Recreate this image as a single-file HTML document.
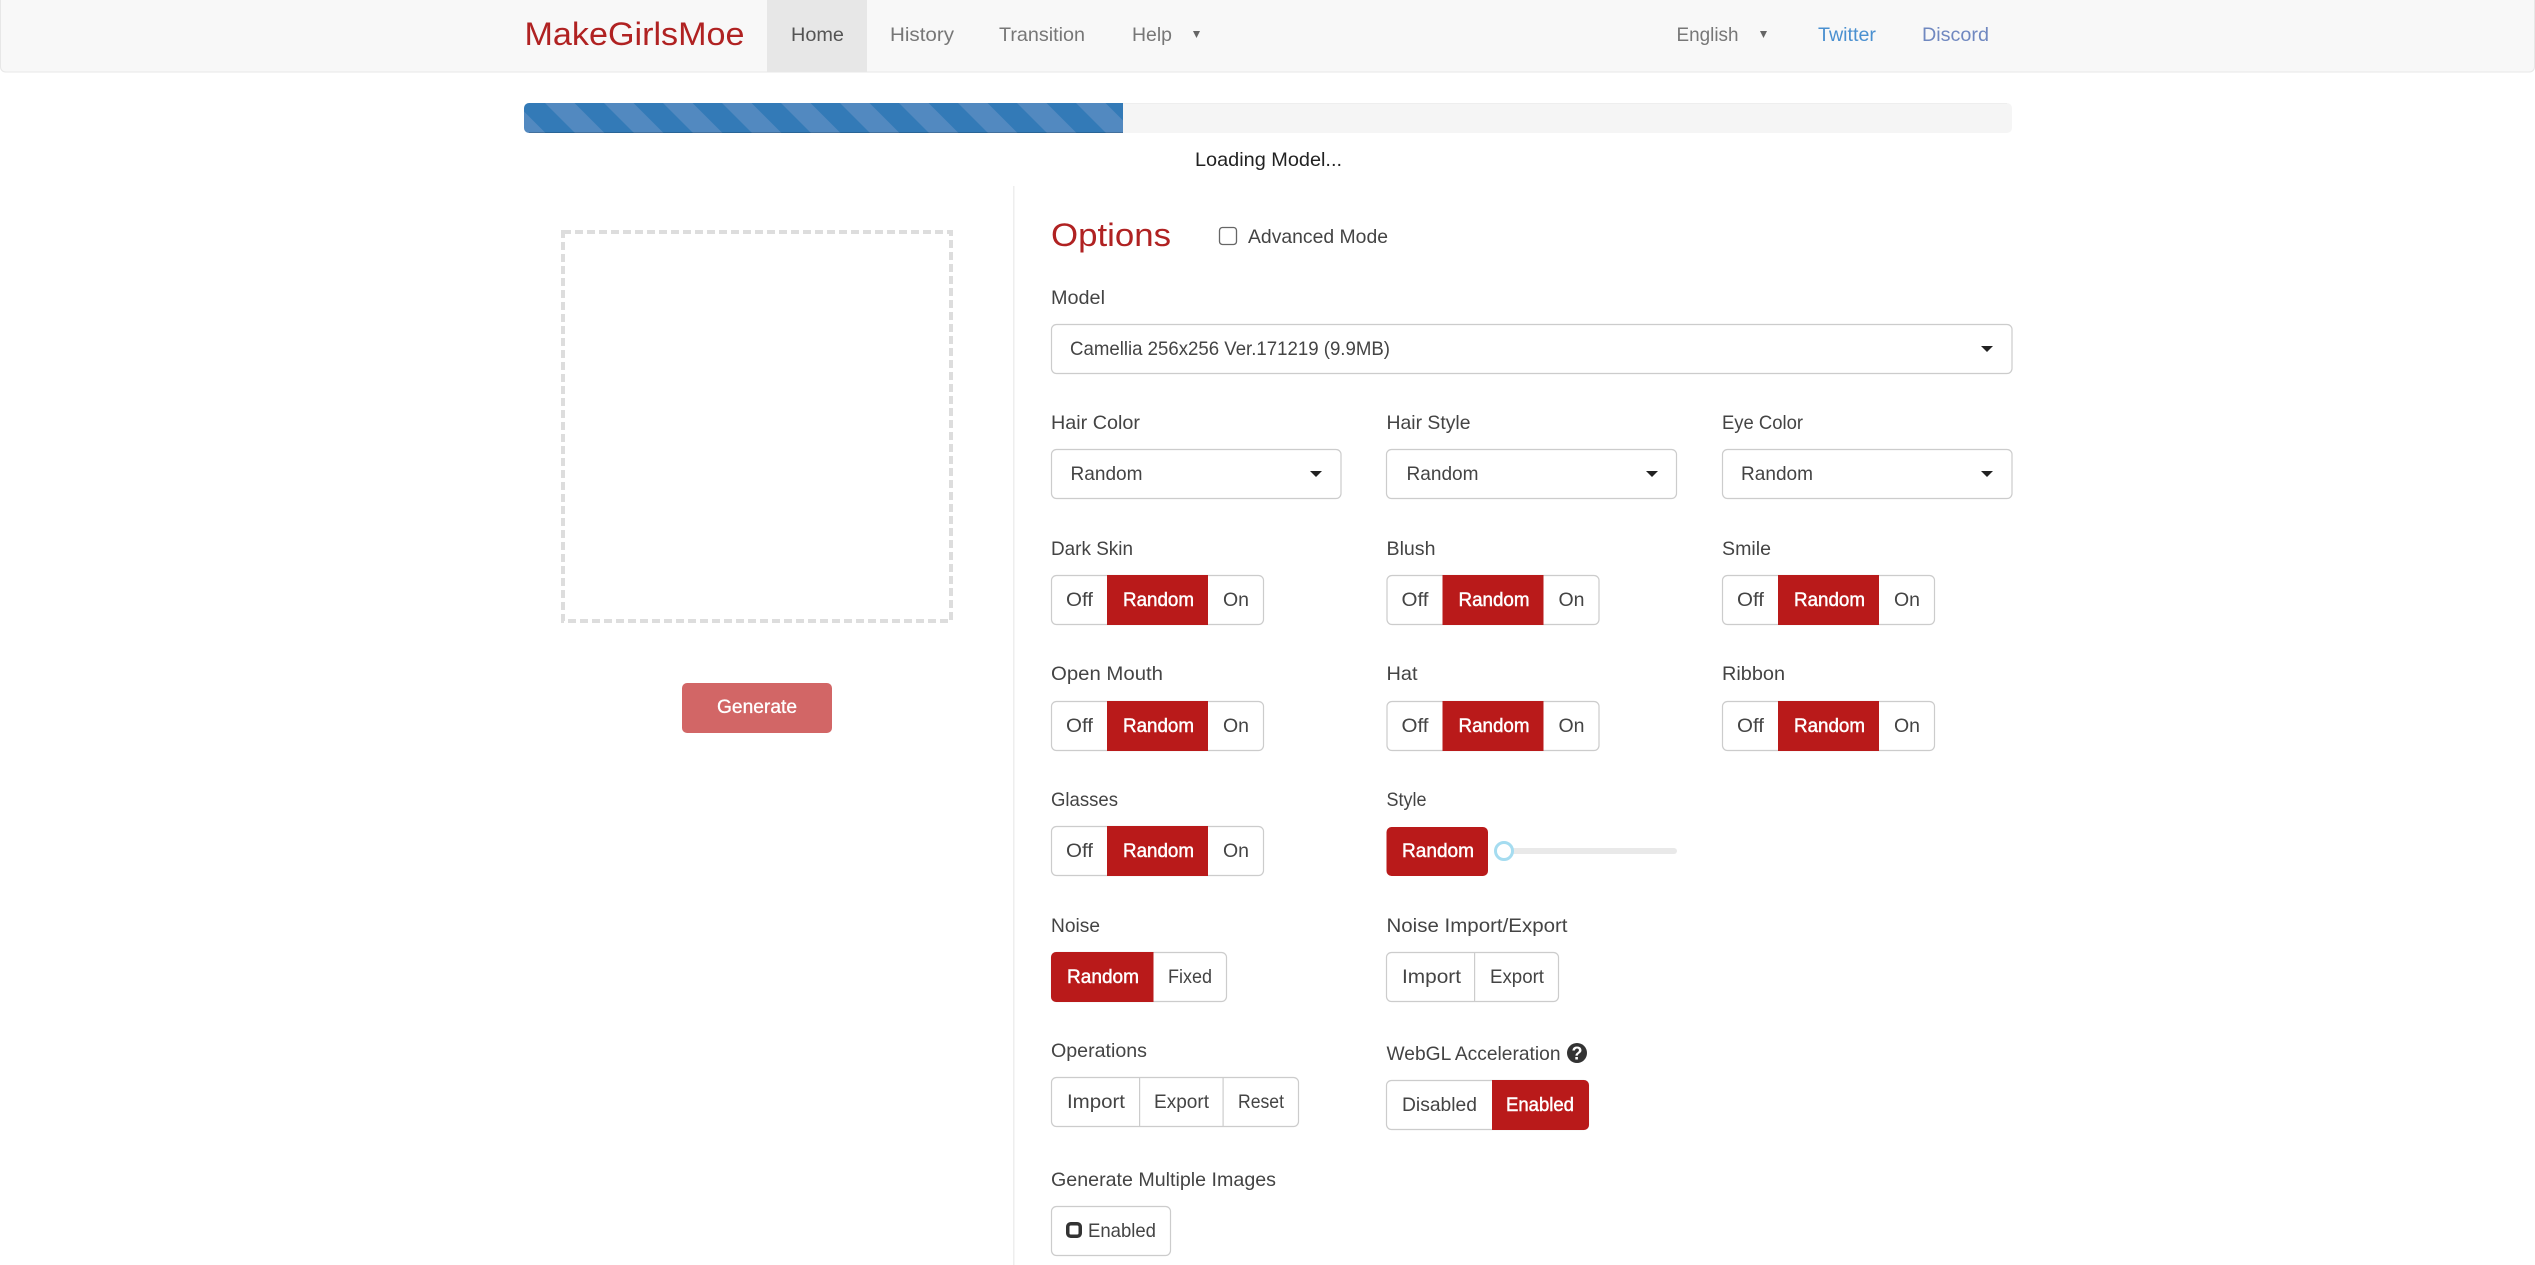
<!DOCTYPE html>
<html lang="en">
<head>
<meta charset="utf-8">
<title>MakeGirlsMoe</title>
<style>
html,body{margin:0;padding:0;background:#fff;width:2535px;height:1265px;overflow:hidden}
svg{display:block}
text{font-family:"Liberation Sans",sans-serif;font-size:19.5px;fill:#444}
.w{fill:#fff;stroke:#fff;stroke-width:.45}
.n{fill:#777}
.r{fill:#b02222;font-size:32px}
.box{fill:#fff;stroke:#ccc;stroke-width:1.2}
.red{fill:#b91a1a}
</style>
</head>
<body>
<svg xmlns="http://www.w3.org/2000/svg" width="2535" height="1265" viewBox="0 0 2535 1265">
<defs>
<pattern id="st" patternUnits="userSpaceOnUse" x="545" y="103" width="59" height="59">
<rect width="59" height="59" fill="#337ab7"/>
<polygon points="0,0 29.5,0 59,29.5 59,59" fill="#5289c0"/>
<polygon points="0,29.5 29.5,59 0,59" fill="#5289c0"/>
</pattern>
<g id="tg">
<rect class="box" x="1051.5" y="575.5" width="212" height="49" rx="5"/>
<rect class="red" x="1107" y="575" width="101" height="50"/>
<text x="1066" y="606" textLength="27" lengthAdjust="spacingAndGlyphs">Off</text>
<text class="w" x="1123" y="606" textLength="71" lengthAdjust="spacingAndGlyphs">Random</text>
<text x="1223" y="606" textLength="26" lengthAdjust="spacingAndGlyphs">On</text>
</g>
</defs>

<!-- navbar -->
<rect x="0.5" y="-8" width="2534" height="80" rx="5" fill="#f8f8f8" stroke="#e7e7e7"/>
<rect x="767" y="0" width="100" height="71.5" fill="#e7e7e7"/>
<text class="r" x="524.5" y="45" textLength="220" lengthAdjust="spacingAndGlyphs">MakeGirlsMoe</text>
<text x="791" y="41" textLength="53" lengthAdjust="spacingAndGlyphs" style="fill:#555">Home</text>
<text class="n" x="890" y="41" textLength="64" lengthAdjust="spacingAndGlyphs">History</text>
<text class="n" x="999" y="41" textLength="86" lengthAdjust="spacingAndGlyphs">Transition</text>
<text class="n" x="1132" y="41" textLength="40" lengthAdjust="spacingAndGlyphs">Help</text>
<polygon points="1193,31 1200,31 1196.5,38" fill="#666"/>
<text class="n" x="1676.5" y="41" textLength="62" lengthAdjust="spacingAndGlyphs">English</text>
<polygon points="1760,31 1767,31 1763.5,38" fill="#666"/>
<text x="1818" y="41" textLength="58" lengthAdjust="spacingAndGlyphs" style="fill:#4a90d0">Twitter</text>
<text x="1922" y="41" textLength="67" lengthAdjust="spacingAndGlyphs" style="fill:#7088c0">Discord</text>

<!-- progress -->
<rect x="524" y="103" width="1488" height="30" rx="5" fill="#f5f5f5"/>
<rect x="529" y="103" width="1478" height="1" fill="#eeeeee"/>
<path d="M1123 103H529a5 5 0 0 0-5 5v20a5 5 0 0 0 5 5h594z" fill="url(#st)"/>
<rect x="529" y="132" width="594" height="1" fill="#000" fill-opacity=".18"/>
<text x="1195" y="166" textLength="147" lengthAdjust="spacingAndGlyphs" style="fill:#222">Loading Model...</text>

<!-- divider -->
<rect x="1013" y="186" width="1.5" height="1079" fill="#eeeeee"/>

<!-- left panel -->
<rect x="563" y="232" width="388" height="389" fill="none" stroke="#dddddd" stroke-width="4" stroke-dasharray="8 4"/>
<rect x="682" y="683" width="150" height="50" rx="5" fill="#d26666"/>
<text class="w" x="717" y="713" textLength="80" lengthAdjust="spacingAndGlyphs" style="stroke-width:.3">Generate</text>

<!-- options -->
<text class="r" x="1051" y="246" textLength="120" lengthAdjust="spacingAndGlyphs">Options</text>
<rect x="1219.5" y="227.5" width="17" height="17" rx="3" fill="#fff" stroke="#666" stroke-width="1.3"/>
<text x="1248" y="243" textLength="140" lengthAdjust="spacingAndGlyphs">Advanced Mode</text>

<text x="1051" y="304" textLength="54" lengthAdjust="spacingAndGlyphs">Model</text>
<rect class="box" x="1051.5" y="324.5" width="960.5" height="49" rx="5"/>
<text x="1070" y="355" textLength="320" lengthAdjust="spacingAndGlyphs">Camellia 256x256 Ver.171219 (9.9MB)</text>
<polygon points="1981,346 1993,346 1987,352" fill="#222"/>

<text x="1051" y="429" textLength="89" lengthAdjust="spacingAndGlyphs">Hair Color</text>
<rect class="box" x="1051.5" y="449.5" width="289.5" height="49" rx="5"/>
<text x="1070.5" y="480" textLength="72" lengthAdjust="spacingAndGlyphs">Random</text>
<polygon points="1310,471 1322,471 1316,477" fill="#222"/>

<text x="1386.5" y="429" textLength="84" lengthAdjust="spacingAndGlyphs">Hair Style</text>
<rect class="box" x="1386.5" y="449.5" width="290" height="49" rx="5"/>
<text x="1406.5" y="480" textLength="72" lengthAdjust="spacingAndGlyphs">Random</text>
<polygon points="1646,471 1658,471 1652,477" fill="#222"/>

<text x="1722" y="429" textLength="81" lengthAdjust="spacingAndGlyphs">Eye Color</text>
<rect class="box" x="1722.5" y="449.5" width="289.5" height="49" rx="5"/>
<text x="1741" y="480" textLength="72" lengthAdjust="spacingAndGlyphs">Random</text>
<polygon points="1981,471 1993,471 1987,477" fill="#222"/>

<!-- toggle labels -->
<text x="1051" y="555" textLength="82" lengthAdjust="spacingAndGlyphs">Dark Skin</text>
<text x="1386.5" y="555" textLength="49" lengthAdjust="spacingAndGlyphs">Blush</text>
<text x="1722" y="555" textLength="49" lengthAdjust="spacingAndGlyphs">Smile</text>
<text x="1051" y="680" textLength="112" lengthAdjust="spacingAndGlyphs">Open Mouth</text>
<text x="1386.5" y="680" textLength="31" lengthAdjust="spacingAndGlyphs">Hat</text>
<text x="1722" y="680" textLength="63" lengthAdjust="spacingAndGlyphs">Ribbon</text>
<text x="1051" y="806" textLength="67" lengthAdjust="spacingAndGlyphs">Glasses</text>
<text x="1386.5" y="806" textLength="40" lengthAdjust="spacingAndGlyphs">Style</text>

<use href="#tg"/>
<use href="#tg" transform="translate(335.5,0)"/>
<use href="#tg" transform="translate(671,0)"/>
<use href="#tg" transform="translate(0,126)"/>
<use href="#tg" transform="translate(335.5,126)"/>
<use href="#tg" transform="translate(671,126)"/>
<use href="#tg" transform="translate(0,251)"/>

<!-- style -->
<rect class="red" x="1386.5" y="827" width="101.5" height="49" rx="5"/>
<text class="w" x="1402" y="857" textLength="72" lengthAdjust="spacingAndGlyphs">Random</text>
<rect x="1504" y="848" width="173" height="6" rx="3" fill="#e9e9e9"/>
<circle cx="1504" cy="851" r="8.5" fill="#fff" stroke="#a5dcf0" stroke-width="3"/>

<!-- noise -->
<text x="1051" y="932" textLength="49" lengthAdjust="spacingAndGlyphs">Noise</text>
<rect class="box" x="1051.5" y="952.5" width="175" height="49" rx="5"/>
<path d="M1153.5 952H1056a5 5 0 0 0-5 5v40a5 5 0 0 0 5 5h97.5z" class="red"/>
<text class="w" x="1067" y="983" textLength="72" lengthAdjust="spacingAndGlyphs">Random</text>
<text x="1168" y="983" textLength="44" lengthAdjust="spacingAndGlyphs">Fixed</text>

<text x="1386.5" y="932" textLength="181" lengthAdjust="spacingAndGlyphs">Noise Import/Export</text>
<rect class="box" x="1386.5" y="952.5" width="172" height="49" rx="5"/>
<rect x="1474" y="953" width="1.2" height="48" fill="#ccc"/>
<text x="1402" y="983" textLength="59" lengthAdjust="spacingAndGlyphs">Import</text>
<text x="1490" y="983" textLength="54" lengthAdjust="spacingAndGlyphs">Export</text>

<!-- operations -->
<text x="1051" y="1057" textLength="96" lengthAdjust="spacingAndGlyphs">Operations</text>
<rect class="box" x="1051.5" y="1077.5" width="247" height="49" rx="5"/>
<rect x="1139" y="1078" width="1.2" height="48" fill="#ccc"/>
<rect x="1222.5" y="1078" width="1.2" height="48" fill="#ccc"/>
<text x="1067" y="1108" textLength="58" lengthAdjust="spacingAndGlyphs">Import</text>
<text x="1154" y="1108" textLength="55" lengthAdjust="spacingAndGlyphs">Export</text>
<text x="1238" y="1108" textLength="46" lengthAdjust="spacingAndGlyphs">Reset</text>

<!-- webgl -->
<text x="1386.5" y="1060" textLength="174" lengthAdjust="spacingAndGlyphs">WebGL Acceleration</text>
<circle cx="1577" cy="1053" r="10" fill="#333"/>
<text x="1577" y="1059.5" text-anchor="middle" style="fill:#fff;font-size:18px;font-weight:bold">?</text>
<rect class="box" x="1386.5" y="1080.5" width="202" height="49" rx="5"/>
<path d="M1492 1080h92a5 5 0 0 1 5 5v40a5 5 0 0 1-5 5h-92z" class="red"/>
<text x="1402" y="1111" textLength="75" lengthAdjust="spacingAndGlyphs">Disabled</text>
<text class="w" x="1506" y="1111" textLength="68" lengthAdjust="spacingAndGlyphs">Enabled</text>

<!-- generate multiple -->
<text x="1051" y="1186" textLength="225" lengthAdjust="spacingAndGlyphs">Generate Multiple Images</text>
<rect class="box" x="1051.5" y="1206.5" width="119" height="49" rx="5"/>
<rect x="1067.75" y="1223.75" width="12.5" height="12.5" rx="3" fill="#fff" stroke="#333" stroke-width="3.5"/>
<text x="1088" y="1237" textLength="68" lengthAdjust="spacingAndGlyphs">Enabled</text>
</svg>
</body>
</html>
